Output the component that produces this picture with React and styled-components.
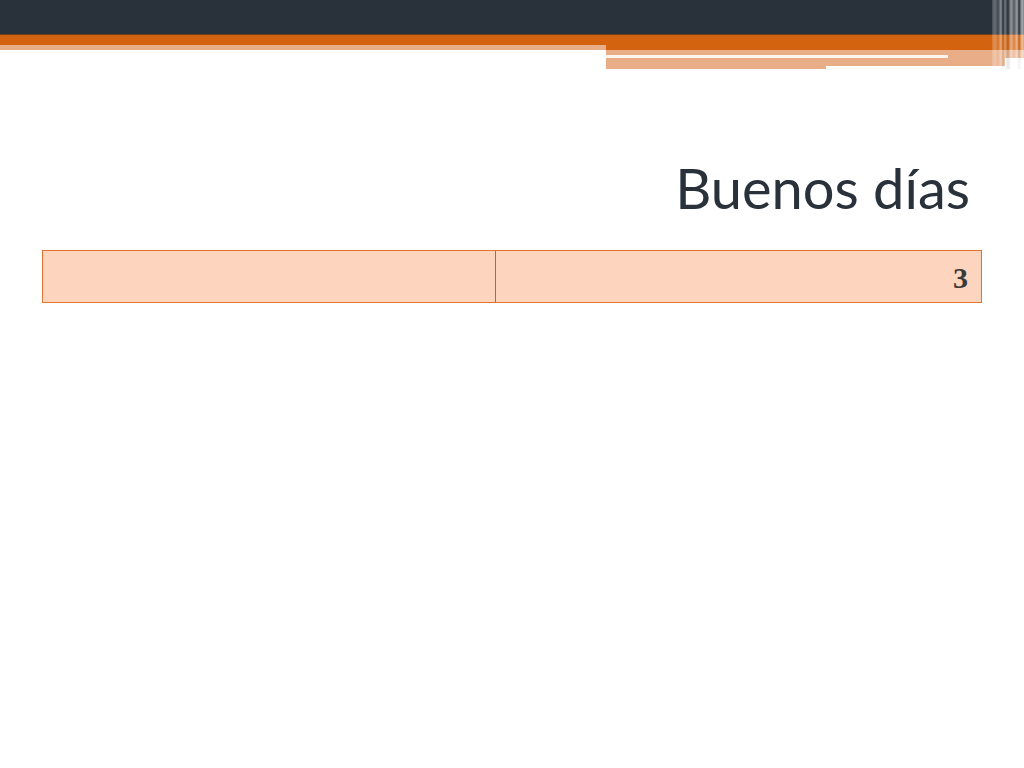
import React from 'react';
import styled, { createGlobalStyle } from 'styled-components';

const GlobalStyle = createGlobalStyle`
  html, body {
    margin: 0;
    padding: 0;
    background: #ffffff;
  }
`;

const Page = styled.div`
  width: 1024px;
  height: 768px;
  background: #ffffff;
  overflow: hidden;
  position: relative;
`;

const Header = styled.div`
  position: relative;
  display: flex;
  flex-direction: column;
`;

const DarkBand = styled.div`
  height: 34px;
  background: #29313a;
  border-bottom: 1px solid #6e3e1e;
`;

const OrangeBand = styled.div`
  height: 10px;
  background: #d3630f;
`;

const Lower = styled.div`
  display: flex;
`;

const LeftTail = styled.div`
  width: 606px;
  height: 5px;
  background: #e9ae88;
`;

const RightTail = styled.div`
  flex: 1;
  display: flex;
  flex-direction: column;
`;

const Strip = styled.div`
  display: flex;
  height: ${(p) => p.h}px;
  background: ${(p) => p.bg || 'transparent'};
`;

const Piece = styled.div`
  width: ${(p) => (p.w ? `${p.w}px` : 'auto')};
  flex: ${(p) => (p.w ? 'none' : 1)};
  height: ${(p) => p.h || '100%'};
  margin-right: ${(p) => p.mr || 0}px;
  background: ${(p) => p.bg};
`;

const Stripes = styled.div`
  position: absolute;
  top: 0;
  right: 0;
  width: 32px;
  height: 69px;
  background: linear-gradient(
    90deg,
    rgba(255, 255, 255, 0.15) 0px,
    rgba(255, 255, 255, 0.3) 3px,
    rgba(255, 255, 255, 0.1) 6px,
    rgba(255, 255, 255, 0.45) 9px,
    rgba(0, 0, 0, 0.05) 11px,
    rgba(255, 255, 255, 0.35) 13px,
    rgba(0, 0, 0, 0.1) 16px,
    rgba(255, 255, 255, 0.5) 19px,
    rgba(255, 255, 255, 0.2) 22px,
    rgba(255, 255, 255, 0.55) 25px,
    rgba(0, 0, 0, 0.05) 27px,
    rgba(255, 255, 255, 0.6) 30px,
    rgba(255, 255, 255, 0.4) 32px
  );
`;

const TitleRow = styled.div`
  display: flex;
  justify-content: flex-end;
  padding: 83px 54px 0 0;
`;

const Title = styled.h1`
  margin: 0;
  font-family: Lato, 'Open Sans', sans-serif;
  font-weight: 400;
  font-size: 56px;
  line-height: 72px;
  color: #29313a;
`;

const Table = styled.div`
  margin: 26px 42px 0 42px;
  display: grid;
  grid-template-columns: 452px 1fr;
  height: 51px;
  border: 1px solid #dd7431;
  background: #fdd5bf;
`;

const Cell = styled.div`
  display: flex;
  align-items: center;
  justify-content: flex-end;
  padding: 3px 13px 0 0;
  border-left: ${(p) => (p.first ? 'none' : '1px solid #c9621f')};
  font-family: 'Liberation Serif', serif;
  font-weight: 700;
  font-size: 30px;
  line-height: 1;
  color: #3a3a3a;
`;

export default function App() {
  return (
    <Page>
      <GlobalStyle />
      <Header>
        <DarkBand />
        <OrangeBand />
        <Lower>
          <LeftTail />
          <RightTail>
            <Strip h={5} bg="#d3630f" />
            <Strip h={5} bg="#e9ae88" />
            <Strip h={3} bg="#e9ae88">
              <Piece w={342} bg="#fdf6ef" />
            </Strip>
            <Strip h={11}>
              <Piece w={220} bg="#e9ae88" />
              <Piece h="8px" mr={19} bg="#e9ae88" />
            </Strip>
          </RightTail>
        </Lower>
        <Stripes />
      </Header>
      <TitleRow>
        <Title>Buenos días</Title>
      </TitleRow>
      <Table>
        <Cell first />
        <Cell>3</Cell>
      </Table>
    </Page>
  );
}
